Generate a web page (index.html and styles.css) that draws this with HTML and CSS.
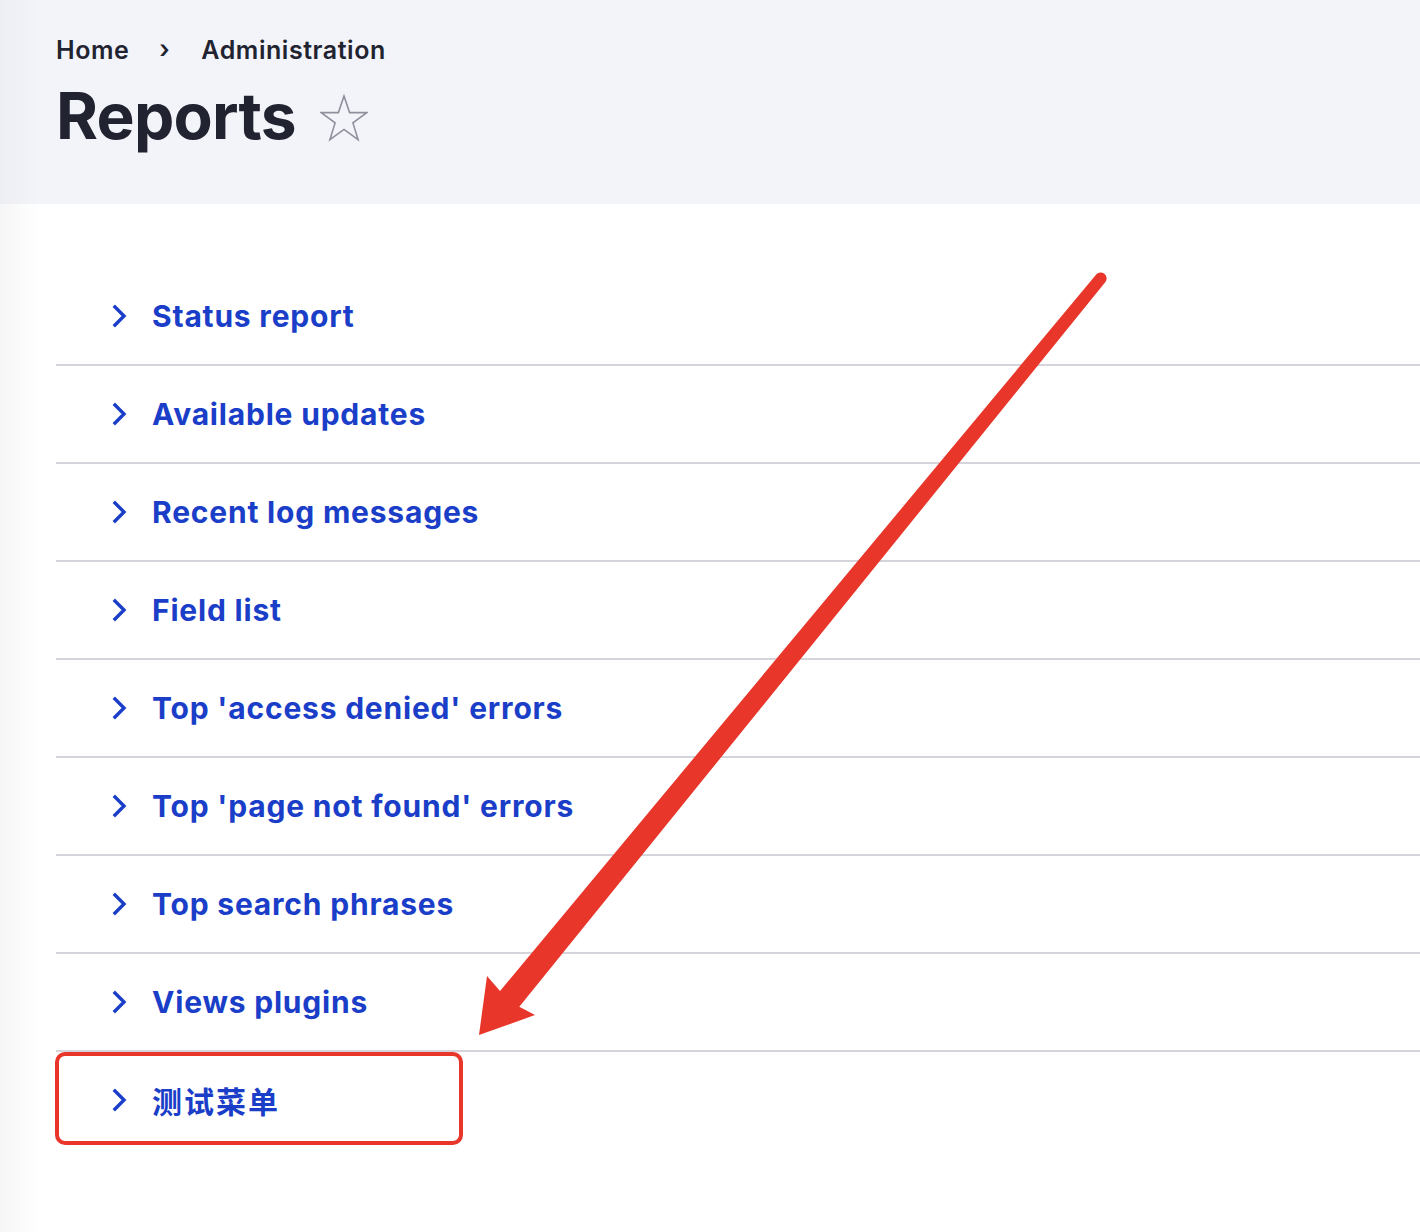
FILE: index.html
```html
<!DOCTYPE html>
<html lang="en">

<head>
  <meta charset="UTF-8">
  <meta name="viewport" content="width=device-width, initial-scale=1.0">
  <title>Reports</title>
  <link rel="stylesheet" href="styles.css">
</head>

<body>
  <div class="page">
    <!-- header: breadcrumb + page title -->
    <header class="page-header">
      <nav class="breadcrumb">
        <a href="#">Home</a>
        <span class="crumb-sep">&rsaquo;</span>
        <a href="#">Administration</a>
      </nav>
      <div class="title-row">
        <h1 class="page-title">Reports</h1>
        <svg class="star" width="48" height="48" viewBox="0 0 48 48">
          <polygon points="24,2 29.6,18.6 46.8,18.6 32.9,28.9 38.1,45.6 24,35.4 9.9,45.6 15.1,28.9 1.2,18.6 18.4,18.6"
            fill="none" stroke="#8e919b" stroke-width="1.6" stroke-linejoin="miter" />
        </svg>
      </div>
    </header>

    <main class="content">
      <ul class="admin-list">
        <li><a href="#"><svg class="chev" width="18" height="28" viewBox="0 0 18 28"><polyline points="4,5 13,14 4,23" /></svg>Status report</a></li>
        <li><a href="#"><svg class="chev" width="18" height="28" viewBox="0 0 18 28"><polyline points="4,5 13,14 4,23" /></svg>Available updates</a></li>
        <li><a href="#"><svg class="chev" width="18" height="28" viewBox="0 0 18 28"><polyline points="4,5 13,14 4,23" /></svg>Recent log messages</a></li>
        <li><a href="#"><svg class="chev" width="18" height="28" viewBox="0 0 18 28"><polyline points="4,5 13,14 4,23" /></svg>Field list</a></li>
        <li><a href="#"><svg class="chev" width="18" height="28" viewBox="0 0 18 28"><polyline points="4,5 13,14 4,23" /></svg>Top 'access denied' errors</a></li>
        <li><a href="#"><svg class="chev" width="18" height="28" viewBox="0 0 18 28"><polyline points="4,5 13,14 4,23" /></svg>Top 'page not found' errors</a></li>
        <li><a href="#"><svg class="chev" width="18" height="28" viewBox="0 0 18 28"><polyline points="4,5 13,14 4,23" /></svg>Top search phrases</a></li>
        <li><a href="#"><svg class="chev" width="18" height="28" viewBox="0 0 18 28"><polyline points="4,5 13,14 4,23" /></svg>Views plugins</a></li>
        <li class="marked"><a href="#"><svg class="chev" width="18" height="28" viewBox="0 0 18 28"><polyline points="4,5 13,14 4,23" /></svg><span class="cjk">测试菜单</span></a></li>
      </ul>
    </main>

    <!-- annotation drawn over the page -->
    <svg class="annotation" width="1420" height="1232" viewBox="0 0 1420 1232">
      <path d="M1096.4 274.2 L500 991 L487 976 L479 1035 L535 1015 L519.3 1006.8 L1105.6 281.8 A6 6 0 0 0 1096.4 274.2 Z"
        fill="#e8372a" />
    </svg>
  </div>
</body>

</html>
```

FILE: styles.css
```css
* {
  margin: 0;
  padding: 0;
  box-sizing: border-box;
}

body {
  font-family: Inter, "Noto Sans", "Noto Sans CJK SC", sans-serif;
  color: #222330;
  background: #fff;
}

.page {
  position: relative;
  min-height: 1232px;
  background: linear-gradient(to right, rgba(0, 0, 0, 0.035), rgba(0, 0, 0, 0) 40px);
}

.page-header {
  height: 204px;
  padding: 35px 0 0 56px;
  background: linear-gradient(to right, rgba(0, 0, 0, 0.025), rgba(0, 0, 0, 0) 40px), #f3f4f9;
}

.breadcrumb {
  display: flex;
  align-items: center;
  height: 30px;
  font-size: 25px;
  font-weight: 600;
  letter-spacing: 0.55px;
}

.breadcrumb a {
  color: #222330;
  text-decoration: none;
}

.crumb-sep {
  font-size: 25px;
  font-weight: 600;
  margin: 0 31px 0 30px;
  position: relative;
  top: -1px;
}

.title-row {
  display: flex;
  align-items: center;
  margin-top: 12px;
}

.page-title {
  font-size: 64px;
  font-weight: 700;
  line-height: 77px;
  letter-spacing: -0.75px;
}

.star {
  margin-left: 24px;
  margin-top: 4px;
}

.content {
  padding: 64px 0 0 56px;
}

.admin-list {
  list-style: none;
}

.admin-list li {
  height: 98px;
  border-bottom: 2px solid #d4d4da;
}

.admin-list li.marked {
  border-bottom: 0;
  position: relative;
}

.admin-list li.marked::after {
  content: "";
  box-sizing: border-box;
  position: absolute;
  left: -1px;
  top: 0;
  width: 408px;
  height: 93px;
  border: 4px solid #e8372a;
  border-radius: 10px;
}

.admin-list a {
  display: flex;
  align-items: center;
  height: 96px;
  padding-left: 55px;
  font-size: 30px;
  font-weight: 700;
  letter-spacing: 0.8px;
  color: #1a3ec8;
  text-decoration: none;
}

.admin-list .cjk {
  letter-spacing: 2px;
}

.chev {
  margin-right: 23px;
  fill: none;
  stroke: #1a3ec8;
  stroke-width: 3.4;
  stroke-linecap: square;
}

.annotation {
  position: absolute;
  left: 0;
  top: 0;
  pointer-events: none;
}
```
